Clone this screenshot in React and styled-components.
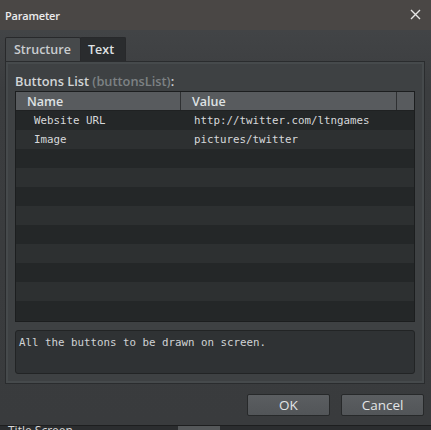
import React from 'react';
import styled, { createGlobalStyle } from 'styled-components';

const GlobalStyle = createGlobalStyle`
  html, body {
    margin: 0;
    padding: 0;
    background: #2b2d2f;
  }
  * {
    box-sizing: border-box;
  }
`;

const uiFont = `"Open Sans", "DejaVu Sans", sans-serif`;
const monoFont = `"DejaVu Sans Mono", "Liberation Mono", monospace`;

// Rows shown in the buttons list
const rows = [
  { name: 'Website URL', value: 'http://twitter.com/ltngames' },
  { name: 'Image', value: 'pictures/twitter' }
];
const TOTAL_ROWS = 11;

const ParameterDialog = () => {
  const filled = Array.from({ length: TOTAL_ROWS }, (_, i) => rows[i] || null);

  return (
    <Window>
      <TitleBar>
        <Title>Parameter</Title>
        <CloseButton>
          <svg width="11" height="11" viewBox="0 0 11 11">
            <path d="M1 1 L10 10 M10 1 L1 10" stroke="#e6e6e6" strokeWidth="1.4" fill="none" />
          </svg>
        </CloseButton>
      </TitleBar>

      <Body>
        <TabBar>
          <Tab active>Structure</Tab>
          <Tab>Text</Tab>
        </TabBar>

        <Panel>
          <SectionLabel>
            Buttons List <Muted>(buttonsList)</Muted>:
          </SectionLabel>

          <Table>
            <HeaderRow>
              <HeaderCell width={165}>Name</HeaderCell>
              <HeaderCell grow>Value</HeaderCell>
              <HeaderCell width={17} />
            </HeaderRow>
            {filled.map((row, i) => (
              <Row key={i} odd={i % 2 === 1}>
                <NameCell>{row ? row.name : ''}</NameCell>
                <ValueCell>{row ? row.value : ''}</ValueCell>
              </Row>
            ))}
          </Table>

          <Description>All the buttons to be drawn on screen.</Description>
        </Panel>

        <Footer>
          <Button>OK</Button>
          <Button>Cancel</Button>
        </Footer>
      </Body>

      <BehindStrip>
        <BehindText>Title Screen</BehindText>
        <BehindBlock />
      </BehindStrip>
    </Window>
  );
};

const Window = styled.div`
  width: 431px;
  height: 430px;
  display: flex;
  flex-direction: column;
  background: #3c3e40;
  overflow: hidden;
`;

const TitleBar = styled.div`
  height: 30px;
  flex: none;
  display: flex;
  align-items: center;
  justify-content: space-between;
  padding: 0 10px 0 5px;
  background: #4a4745;
`;

const Title = styled.div`
  font-family: ${uiFont};
  font-size: 11px;
  font-weight: 600;
  color: #ececec;
  letter-spacing: -0.2px;
`;

const CloseButton = styled.div`
  display: flex;
  align-items: center;
  margin-top: -1px;
`;

const Body = styled.div`
  flex: none;
  display: flex;
  flex-direction: column;
  padding: 7px 6px 0 5px;
  background: linear-gradient(#424446, #3b3d3f 60px, #393b3d);
`;

const TabBar = styled.div`
  display: flex;
  height: 24px;
  align-items: flex-end;
`;

const Tab = styled.div`
  height: 24px;
  display: flex;
  align-items: center;
  padding: 0 ${p => (p.active ? '8px' : '7px')};
  width: ${p => (p.active ? '76px' : '46px')};
  font-family: ${uiFont};
  font-size: 12.5px;
  font-weight: 600;
  color: ${p => (p.active ? '#c9cdd0' : '#dfe1e3')};
  background: ${p => (p.active ? '#46494b' : '#2a2c2e')};
  border: 1px solid #28292b;
  border-bottom: none;
  border-radius: 2px 2px 0 0;
  margin-right: -1px;
`;

const Panel = styled.div`
  height: 323px;
  display: flex;
  flex-direction: column;
  padding: 10px 9px 9px 9px;
  background: #3e4143;
  border: 1px solid #2a2c2e;
  box-shadow: inset 0 0 0 2px #464a4c;
`;

const SectionLabel = styled.div`
  height: 18px;
  line-height: 18px;
  margin-bottom: 1px;
  font-family: ${uiFont};
  font-size: 12.8px;
  font-weight: 600;
  color: #d2d5d7;
`;

const Muted = styled.span`
  color: #7d8184;
`;

const Table = styled.div`
  height: 231px;
  display: flex;
  flex-direction: column;
  background: #252829;
  border: 1px solid #1c1e1f;
  overflow: hidden;
`;

const HeaderRow = styled.div`
  height: 19px;
  flex: none;
  display: flex;
  background: #585b5e;
  border-bottom: 1px solid #1f2122;
`;

const HeaderCell = styled.div`
  ${p => (p.grow ? 'flex: 1;' : `width: ${p.width}px; flex: none;`)}
  height: 100%;
  display: flex;
  align-items: center;
  padding-left: 11px;
  font-family: ${uiFont};
  font-size: 12.5px;
  font-weight: 600;
  color: #dfe2e4;
  border-right: 1px solid #2e3032;
  &:last-child {
    border-right: none;
  }
`;

const Row = styled.div`
  height: 19px;
  flex: none;
  display: flex;
  align-items: center;
  background: ${p => (p.odd ? '#2d3031' : '#242728')};
`;

const NameCell = styled.div`
  width: 165px;
  padding-left: 18px;
  font-family: ${monoFont};
  font-size: 10.8px;
  color: #d6d8da;
`;

const ValueCell = styled.div`
  flex: 1;
  padding-left: 13px;
  font-family: ${monoFont};
  font-size: 10.8px;
  color: #d6d8da;
`;

const Description = styled.div`
  height: 44px;
  margin-top: 8px;
  padding: 5px 3px;
  background: #2f3234;
  border: 1px solid #222425;
  border-radius: 3px;
  font-family: ${monoFont};
  font-size: 10.8px;
  color: #d0d3d5;
`;

const Footer = styled.div`
  height: 41px;
  display: flex;
  justify-content: flex-end;
  align-items: flex-start;
  gap: 11px;
  padding: 10px 1px 0 0;
`;

const Button = styled.div`
  width: 83px;
  height: 22px;
  display: flex;
  align-items: center;
  justify-content: center;
  font-family: ${uiFont};
  font-size: 13.5px;
  color: #e2e4e6;
  background: linear-gradient(#5b5e61, #525558);
  border: 1px solid #27292a;
  border-radius: 2px;
`;

const BehindStrip = styled.div`
  flex: 1;
  position: relative;
  display: flex;
  align-items: flex-start;
  background: #2b2d2f;
  border-top: 1px solid #1d1e1f;
  overflow: hidden;
`;

const BehindText = styled.div`
  margin: -1px 0 0 8px;
  font-family: ${uiFont};
  font-size: 12px;
  line-height: 12px;
  color: #d8d8d8;
`;

const BehindBlock = styled.div`
  position: absolute;
  left: 178px;
  top: 0;
  width: 42px;
  height: 6px;
  background: #55585a;
`;

const App = () => (
  <>
    <GlobalStyle />
    <ParameterDialog />
  </>
);

export default App;
